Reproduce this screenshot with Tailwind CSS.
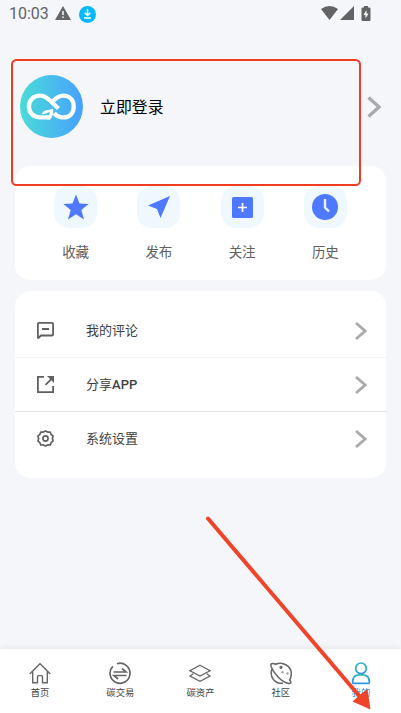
<!DOCTYPE html>
<html lang="zh-CN">
<head>
<meta charset="utf-8">
<meta name="viewport" content="width=device-width, initial-scale=1">
<title>我的</title>
<script src="https://cdn.jsdelivr.net/npm/@tailwindcss/browser@4"></script>
</head>
<body class="relative flex h-[713px] w-[401px] flex-col overflow-hidden bg-[#f4f6fa] font-['Noto_Sans_CJK_SC',sans-serif]">
  <header class="flex h-7 shrink-0 items-center pl-[9px] text-[#636366]">
    <span class="w-[46px] font-['Roboto',sans-serif] text-[16px] leading-7">10:03</span>
    <svg class="h-[14px] w-4 -translate-y-px" viewBox="0 0 16 14"><path fill="#666" d="M8 0 16 14H0Z"/><path stroke="#f4f6fb" stroke-width="1.6" d="M8 5v4M8 10.500v1.600"/></svg>
    <svg class="ml-2 size-[17px]" viewBox="0 0 17 17"><circle cx="8.500" cy="8.500" r="8.500" fill="#05b9ff"/><path d="M8.500 3v6M5.700 6.700l2.800 2.800 2.800-2.800M5 12h7" fill="none" stroke="#fff" stroke-width="1.400"/></svg>
    <svg class="ml-[225px] h-[14px] w-[17px] -translate-y-px" viewBox="0 0 17 14"><path fill="#636363" d="M0 3Q8.500-3 17 3L8.500 14Z"/></svg>
    <svg class="ml-[2px] size-[14px] -translate-y-px" viewBox="0 0 14 14"><path fill="#636363" d="M14 0v14H0Z"/></svg>
    <svg class="ml-[7px] h-[15px] w-[10px] -translate-y-px" viewBox="0 0 10 15"><path fill="#636363" d="M3 0h4v1.500h1.500q1 0 1 1V14q0 1-1 1h-7q-1 0-1-1V2.500q0-1 1-1H3Z"/><path fill="#fff" d="M5.500 4 2.500 9h2v3.500l3-5h-2Z"/></svg>
  </header>

  <section class="flex h-[138px] shrink-0 items-center pt-[19px] pl-5 pr-5">
    <svg class="size-[63px]" viewBox="60 75 190 190">
      <defs><linearGradient id="brand"><stop stop-color="#49dcd7"/><stop offset="1" stop-color="#48a0ff"/></linearGradient></defs>
      <circle cx="155" cy="170" r="95" fill="url(#brand)"/>
      <g fill="none" stroke="#fff" stroke-width="13">
        <path d="M150 203H121C100 203 87 189 87 170S100 137 121 137C133 137 140 143 147 149L176 176"/>
        <path d="M159 154C170 143 178 137 190 137C211 137 222 152 222 170S211 203 190 203C178 203 170 199 163 190"/>
      </g>
      <path fill="#fff" d="M125 193Q130 182 143 180.500Q153 180 160 177Q162 197 151 209.500H142Q149 200 150 186Q140 193 125 193Z"/>
    </svg>
    <span class="ml-[17px] text-[15.900px] leading-6 text-black">立即登录</span>
    <svg class="ml-auto h-[22px] w-[14px]" viewBox="0 0 14 22"><path d="M1.500 1.500 12 11 1.500 20.500" fill="none" stroke="#aaa" stroke-width="3.300"/></svg>
  </section>

  <nav class="mx-[15px] grid h-[114px] w-[371px] shrink-0 grid-cols-4 rounded-[15px] bg-white px-[19px] pt-5 text-[13.5px] leading-5 text-[#606060]">
    <a class="flex flex-col items-center gap-[13px]"><span class="flex h-[42px] w-[43px] items-center justify-center rounded-[15px] bg-[#eff7ff]"><svg class="size-[26px]" viewBox="0 0 26 26"><path fill="#4e78ff" d="m13 .5 3.500 9 9.200.5-7.400 6 2.700 9.500-8-5.300-8 5.300L7.700 16 .3 10l9.200-.5Z"/></svg></span>收藏</a>
    <a class="flex flex-col items-center gap-[13px]"><span class="flex h-[42px] w-[43px] items-center justify-center rounded-[15px] bg-[#eff7ff]"><svg class="h-[22px] w-[22px]" viewBox="0 0 22 22"><path fill="#4e78ff" d="M22 0 12.500 22 9 13 0 9.500Z"/></svg></span>发布</a>
    <a class="flex flex-col items-center gap-[13px]"><span class="flex h-[42px] w-[43px] items-center justify-center rounded-[15px] bg-[#eff7ff]"><svg class="size-[21px]" viewBox="0 0 21 21"><rect width="21" height="21" rx="1.500" fill="#4e78ff"/><path d="M10.500 6v9M6 10.500h9" stroke="#fff" stroke-width="1.700"/></svg></span>关注</a>
    <a class="flex flex-col items-center gap-[13px]"><span class="flex h-[42px] w-[43px] items-center justify-center rounded-[15px] bg-[#eff7ff]"><svg class="size-[26px]" viewBox="0 0 26 26"><circle cx="13" cy="13" r="13" fill="#4e78ff"/><path d="M13 5v8.500l4 4" fill="none" stroke="#e8f2ff" stroke-width="2.400"/></svg></span>历史</a>
  </nav>

  <main class="mx-[15px] mt-[11px] flex h-[187px] w-[371px] shrink-0 flex-col rounded-[15px] bg-white pt-[13px] text-[13px] leading-5 text-[#3f3f3f]">
    <a class="flex h-[54px] items-center border-b border-[#f4f4f4] pl-[22px] pr-[19px]">
      <svg class="h-[17px] w-[17px]" viewBox="0 0 17 17" fill="none" stroke="#606060" stroke-width="1.800"><path d="M.9 16.500V2q0-1.100 1.100-1.100h13q1.100 0 1.100 1.100v10.400q0 1.100-1.100 1.100H4L.9 16.500M5 7h7"/></svg>
      <span class="ml-[32px] pb-px">我的评论</span>
      <svg class="ml-auto h-[18px] w-3" viewBox="0 0 12 18"><path d="m1 1 9.200 8L1 17" fill="none" stroke="#aaa" stroke-width="2.800"/></svg>
    </a>
    <a class="flex h-[54px] items-center border-b border-[#e2e2e2] pl-[22px] pr-[19px]">
      <svg class="size-[17px]" viewBox="0 0 17 17" fill="none" stroke="#606060" stroke-width="1.800"><path d="M7 .9H.9v15.200h15.200V10M8.500 8.800l6-6"/><path d="M10 0h7v7Z" fill="#606060" stroke="none"/></svg>
      <span class="ml-[32px] pb-px">分享<span class="font-['Roboto',sans-serif] text-[13px] font-medium">APP</span></span>
      <svg class="ml-auto h-[18px] w-3" viewBox="0 0 12 18"><path d="m1 1 9.200 8L1 17" fill="none" stroke="#aaa" stroke-width="2.800"/></svg>
    </a>
    <a class="flex h-[53px] items-center pl-[22px] pr-[19px]">
      <svg class="size-[17px]" viewBox="0 0 18 18" fill="none" stroke="#606060" stroke-width="1.800"><path stroke-linejoin="round" d="M9 1 11.300 2.200 14 2.100 15 4.700 17 6.500 16.300 9 17 11.500 15 13.300 14 15.900 11.300 15.800 9 17 6.700 15.800 4 15.900 3 13.300 1 11.500 1.700 9 1 6.500 3 4.700 4 2.100 6.700 2.200Z"/><circle cx="9" cy="9" r="2.700"/></svg>
      <span class="ml-[32px] pb-px">系统设置</span>
      <svg class="ml-auto h-[18px] w-3" viewBox="0 0 12 18"><path d="m1 1 9.200 8L1 17" fill="none" stroke="#aaa" stroke-width="2.800"/></svg>
    </a>
  </main>

  <footer class="mt-auto grid h-16 shrink-0 grid-cols-5 bg-white pt-[13px] text-[9.300px] leading-[14px] text-[#444] shadow-[0_-1px_7px_rgba(0,0,0,0.08)]">
    <a class="flex flex-col items-center"><svg class="h-[23px] w-[22px]" viewBox="0 0 22 23" fill="none" stroke="#666" stroke-width="1.400"><path d="M.7 12 11 1.800 21.300 12M3.700 9.500v11.300h4.800v-6.200q0-1 1-1h3q1 0 1 1v6.200h4.800V9.500"/></svg>首页</a>
    <a class="flex flex-col items-center"><svg class="h-[23px] w-[22px]" viewBox="0 0 22 23" fill="none" stroke="#666" stroke-width="1.700"><path d="M8 1.700a10 10 0 1 1-4.200 2.600M4.500 10h12.500L13 6.500M17.500 13.500H5l4 3.500"/></svg>碳交易</a>
    <a class="flex flex-col items-center"><svg class="h-[23px] w-[22px]" viewBox="0 0 22 23" fill="none" stroke="#666" stroke-width="1.300"><path d="M11 3.300 21 8.700l-10 5.400L1 8.700ZM4.300 11.800 1 14l10 5.300L21 14l-3.300-2.200"/></svg>碳资产</a>
    <a class="flex flex-col items-center"><svg class="h-[23px] w-[22px]" viewBox="0 0 22 23" fill="none" stroke="#666" stroke-width="1.500"><path d="M5.500 2.300C13-.8 21.300 4 21.300 12q0 4-1.800 6.500M2 7C-1 15 5 22 13 21.300"/><path d="M6 2.500C2 .5 0 1.700 1.200 4.700 3.500 11 11 19.500 18 21.300c3 .8 3.800-.8 1.600-3.300"/><circle cx="11" cy="5.300" r=".9" fill="#666"/><circle cx="12.500" cy="10.300" r=".3" fill="#666"/><circle cx="17.500" cy="11.500" r=".3" fill="#666"/></svg>社区</a>
    <a class="flex flex-col items-center text-[#2498ee]"><svg class="h-[23px] w-[22px]" viewBox="0 0 22 23" fill="none" stroke="url(#person)" stroke-width="1.700"><defs><linearGradient id="person" x1="0" y1="0" x2="0" y2="1"><stop stop-color="#32b3c0"/><stop offset="1" stop-color="#2497ec"/></linearGradient></defs><circle cx="11" cy="6.300" r="5.300"/><path d="M3.600 21.300q-1 0-1-1 0-7.500 6.500-7.500h3.800q6.500 0 6.500 7.500 0 1-1 1Z"/></svg>我的</a>
  </footer>

  <!-- Annotation frame and pointer drawn over the page -->
  <svg class="pointer-events-none absolute inset-0 h-[713px] w-[401px]" viewBox="0 0 401 713"><rect x="12" y="60" width="348" height="125" rx="4.500" fill="none" stroke="#ef3d24" stroke-width="2"/><path d="M208 518.500 361 698" stroke="#ef4429" stroke-width="4" stroke-linecap="round"/><path fill="#ef4429" d="M370.500 709.500 352.500 701.500 357.500 697 361 694 367.500 689Z"/></svg>
</body>
</html>
